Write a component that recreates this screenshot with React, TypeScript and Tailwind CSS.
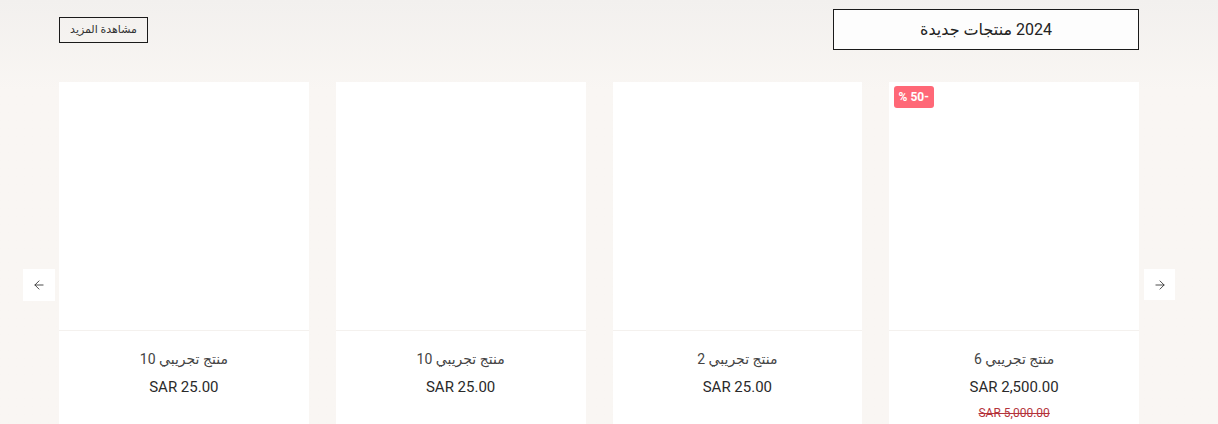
import React from "react";
import { ArrowLeft, ArrowRight } from "lucide-react";

type P = { name: string; price: string; old?: string; badge?: boolean };

const products: P[] = [
  { name: "منتج تجريبي 6", price: "SAR 2,500.00", old: "SAR 5,000.00", badge: true },
  { name: "منتج تجريبي 2", price: "SAR 25.00" },
  { name: "منتج تجريبي 10", price: "SAR 25.00" },
  { name: "منتج تجريبي 10", price: "SAR 25.00" },
];

function Card({ p }: { p: P }) {
  return (
    <div className="bg-white flex flex-col h-[360px]">
      <div className="relative h-[249px] border-b border-[#f4f1ee]">
        {p.badge && (
          <span
            dir="ltr"
            className="absolute right-[205px] top-[4px] bg-[#ff6877] text-white text-[12px] font-bold rounded-[3px] px-[5px] h-[22px] flex flex-row items-center"
          >
            <span>%</span>
            <span className="ml-[3px]">50</span>
            <span>-</span>
          </span>
        )}
      </div>
      <div className="flex flex-col items-center pt-[18px]">
        <div className="text-[14px] text-[#444] leading-[20px]">{p.name}</div>
        <div className="text-[15px] text-[#2a2a2a] leading-[20px] mt-[8px]" dir="ltr">
          {p.price}
        </div>
        {p.old && (
          <div className="text-[12px] text-[#b4333b] line-through leading-[16px] mt-[8px]" dir="ltr">
            {p.old}
          </div>
        )}
      </div>
    </div>
  );
}

export default function App() {
  return (
    <div
      dir="rtl"
      className="relative w-[1218px] h-[424px] overflow-hidden bg-gradient-to-b from-[#f2f0ee] to-[#f9f6f3] to-[90px]"
      style={{ fontFamily: "Roboto, 'DejaVu Sans', sans-serif" }}
    >
      <div className="w-[1080px] mr-[79px] pt-[9px]">
        <div className="flex items-start justify-between">
          <div className="w-[306px] h-[41px] border border-[#1a1a1a] bg-[#fdfdfd] flex items-center justify-center text-[16px] text-[#222]">
            2024 منتجات جديدة
          </div>
          <div className="mt-[8px] w-[89px] h-[26px] border border-[#1a1a1a] flex items-center justify-center text-[11px] text-[#333]">
            مشاهدة المزيد
          </div>
        </div>
        <div className="grid grid-cols-4 gap-x-[27px] mt-[32px]">
          {products.map((p, i) => (
            <Card key={i} p={p} />
          ))}
        </div>
      </div>
      <button className="absolute left-[23px] top-[269px] w-[32px] h-[32px] bg-white flex items-center justify-center">
        <ArrowLeft size={14} strokeWidth={1.5} color="#333" />
      </button>
      <button className="absolute left-[1144px] top-[269px] w-[31px] h-[31px] bg-white flex items-center justify-center">
        <ArrowRight size={14} strokeWidth={1.5} color="#333" />
      </button>
    </div>
  );
}
